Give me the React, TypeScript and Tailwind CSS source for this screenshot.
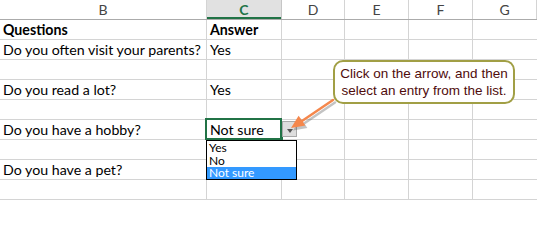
const cols = [
  { key: 'B', w: 'w-[207px]' },
  { key: 'C', w: 'w-[75px]' },
  { key: 'D', w: 'w-[63px]' },
  { key: 'E', w: 'w-[64px]' },
  { key: 'F', w: 'w-[64px]' },
  { key: 'G', w: 'flex-1' },
];

const rows: [string, string, boolean?][] = [
  ['Questions', 'Answer', true],
  ['Do you often visit your parents?', 'Yes'],
  ['', ''],
  ['Do you read a lot?', 'Yes'],
  ['', ''],
  ['Do you have a hobby?', 'Not sure'],
  ['', ''],
  ['Do you have a pet?', ''],
  ['', ''],
];

function Arrow() {
  return (
    <svg
      className="absolute left-[280px] top-[95px] w-[60px] h-[42px] overflow-visible"
      viewBox="0 0 60 42"
    >
      <g transform="translate(2 2.5)" opacity="0.35" fill="#555" stroke="#555">
        <line x1="53" y1="5" x2="22" y2="26" strokeWidth="2.5" strokeLinecap="round" />
        <polygon points="11,33 25.4,30.6 18.6,20.8" stroke="none" />
      </g>
      <line x1="53" y1="5" x2="22" y2="26" stroke="#f5874c" strokeWidth="2.5" strokeLinecap="round" />
      <polygon points="11,33 25.4,30.6 18.6,20.8" fill="#f5874c" />
    </svg>
  );
}

export default function App() {
  return (
    <div
      className="relative w-[537px] h-[200px] overflow-hidden bg-white text-black"
      style={{ fontFamily: 'Lato, "Open Sans", sans-serif' }}
    >
      {/* column headers */}
      <div className="flex h-[20px] border-b border-[#ababab]">
        {cols.map((c) => (
          <div
            key={c.key}
            className={`${c.w} flex items-center justify-center border-r text-[14px] ${
              c.key === 'C'
                ? 'bg-[#e1e1e1] border-[#c6c6c6] text-[#217346] font-bold shadow-[inset_0_-2px_0_#217346]'
                : 'border-[#d4d4d4] text-[#444]'
            }`}
          >
            {c.key}
          </div>
        ))}
      </div>

      {rows.map(([q, a, bold], i) => (
        <div
          key={i}
          className={`flex h-[20px] border-b border-[#d4d4d4] text-[14.2px] leading-[20px] ${bold ? 'font-bold' : ''}`}
        >
          <div className="w-[207px] border-r border-[#d4d4d4] pl-[3px] whitespace-nowrap">{q}</div>
          <div className="w-[75px] border-r border-[#d4d4d4] pl-[3px] whitespace-nowrap">{a}</div>
          <div className="w-[63px] border-r border-[#d4d4d4]" />
          <div className="w-[64px] border-r border-[#d4d4d4]" />
          <div className="w-[64px] border-r border-[#d4d4d4]" />
          <div className="flex-1" />
        </div>
      ))}

      {/* active cell */}
      <div className="absolute left-[205px] top-[118px] w-[77px] h-[22px] border-2 border-[#217346]" />
      <div className="absolute left-[280px] top-[137px] w-[3px] h-[3px] bg-[#217346]" />

      {/* dropdown button */}
      <div className="absolute left-[282px] top-[121px] w-[15px] h-[16px] bg-[#dedede] border border-[#a9a9a9] flex items-center justify-center">
        <div className="mt-[3px] w-0 h-0 border-l-[3.5px] border-r-[3.5px] border-t-[4px] border-l-transparent border-r-transparent border-t-[#555]" />
      </div>

      {/* dropdown list */}
      <div className="absolute left-[206px] top-[140px] w-[91px] h-[40px] bg-white border border-black text-[12px] leading-[13px]">
        <div className="h-[13px] pl-[2px]">Yes</div>
        <div className="h-[13px] pl-[2px]">No</div>
        <div className="h-[12px] pl-[2px] leading-[12px] bg-[#3399ff] text-white">Not sure</div>
      </div>

      {/* callout */}
      <div
        className="absolute left-[333px] top-[60px] w-[182px] h-[44px] rounded-[10px] border-2 border-[#a19f45] bg-white text-[#4f0c0c] text-[13.5px] leading-[17px] flex flex-col items-center justify-center"
        style={{ fontFamily: '"Liberation Sans", Arial, sans-serif' }}
      >
        <div>Click on the arrow, and then</div>
        <div>select an entry from the list.</div>
      </div>

      <Arrow />
    </div>
  );
}
